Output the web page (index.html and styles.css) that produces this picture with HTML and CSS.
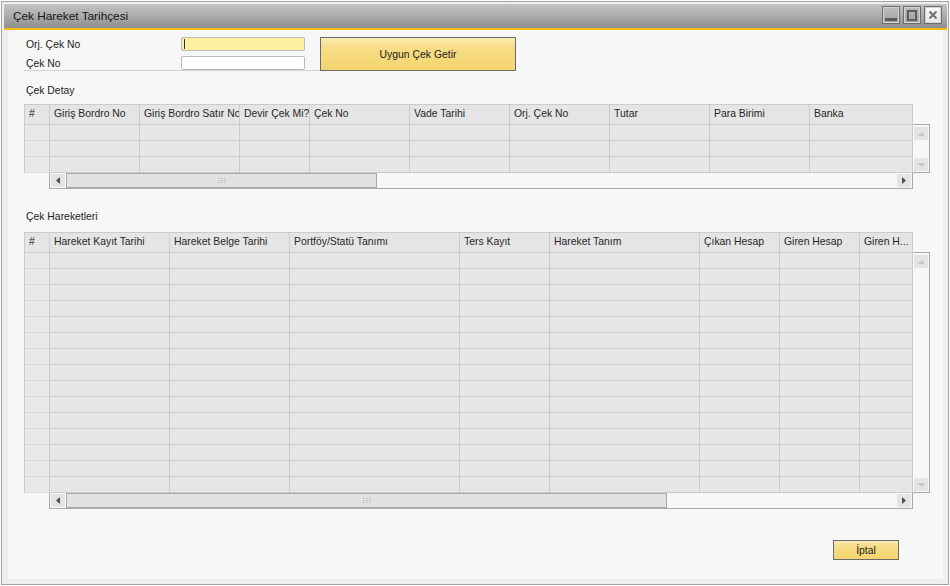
FILE: index.html
```html
<!DOCTYPE html>
<html lang="tr">
<head>
<meta charset="utf-8">
<title>Çek Hareket Tarihçesi</title>
<link rel="stylesheet" href="styles.css">
</head>
<body>
<div class="window">
  <div class="titlebar">
    <span class="title">Çek Hareket Tarihçesi</span>
    <div class="winbtns">
      <span class="wbtn"><svg width="16" height="16" viewBox="0 0 16 16"><rect x="2" y="11" width="12" height="3" fill="#5c5c5c"/></svg></span>
      <span class="wbtn"><svg width="16" height="16" viewBox="0 0 16 16"><rect x="4" y="4" width="8" height="9" fill="none" stroke="#5c5c5c" stroke-width="2"/></svg></span>
      <span class="wbtn close"><svg width="16" height="16" viewBox="0 0 16 16"><path d="M4.5 4.5 L11.5 11.5 M11.5 4.5 L4.5 11.5" stroke="#6e6e6e" stroke-width="2" fill="none"/></svg></span>
    </div>
  </div>
  <div class="accent"></div>
  <div class="content">
    <div class="form">
      <div class="fields">
        <div class="frow"><span class="flabel">Orj. Çek No</span><div class="finput active"><span class="caret"></span></div></div>
        <div class="frow last"><span class="flabel">Çek No</span><div class="finput"></div></div>
      </div>
      <button class="btn big">Uygun Çek Getir</button>
    </div>

    <div class="section-label s1">Çek Detay</div>
    <div class="grid g1">
      <div class="grid-top">
        <div class="table">
          <div class="row head"><div>#</div><div>Giriş Bordro No</div><div>Giriş Bordro Satır No</div><div>Devir Çek Mi?</div><div>Çek No</div><div>Vade Tarihi</div><div>Orj. Çek No</div><div>Tutar</div><div>Para Birimi</div><div>Banka</div></div>
          <div class="row"><div class="n"></div><div></div><div></div><div></div><div></div><div></div><div></div><div></div><div></div><div></div></div>
          <div class="row"><div class="n"></div><div></div><div></div><div></div><div></div><div></div><div></div><div></div><div></div><div></div></div>
          <div class="row"><div class="n"></div><div></div><div></div><div></div><div></div><div></div><div></div><div></div><div></div><div></div></div>
        </div>
        <div class="vscroll">
          <span class="vb"><svg width="7" height="4" viewBox="0 0 7 4"><path d="M0 4 L3.5 0 L7 4 Z" fill="#c3c3c3"/></svg></span>
          <span class="vb"><svg width="7" height="4" viewBox="0 0 7 4"><path d="M0 0 L3.5 4 L7 0 Z" fill="#c3c3c3"/></svg></span>
        </div>
      </div>
      <div class="hscroll">
        <span class="hb"><svg width="4" height="7" viewBox="0 0 4 7"><path d="M4 0 L0 3.5 L4 7 Z" fill="#4d4d4d"/></svg></span>
        <span class="thumb" style="width:311px"><svg width="8" height="5" viewBox="0 0 8 5"><g fill="#a9a9a9"><rect x="0" y="0" width="1" height="1"/><rect x="3" y="0" width="1" height="1"/><rect x="6" y="0" width="1" height="1"/><rect x="1" y="2" width="1" height="1"/><rect x="4" y="2" width="1" height="1"/><rect x="7" y="2" width="1" height="1"/><rect x="0" y="4" width="1" height="1"/><rect x="3" y="4" width="1" height="1"/><rect x="6" y="4" width="1" height="1"/></g></svg></span>
        <span class="hb right"><svg width="4" height="7" viewBox="0 0 4 7"><path d="M0 0 L4 3.5 L0 7 Z" fill="#4d4d4d"/></svg></span>
      </div>
    </div>

    <div class="section-label s2">Çek Hareketleri</div>
    <div class="grid g2">
      <div class="grid-top">
        <div class="table">
          <div class="row head"><div>#</div><div>Hareket Kayıt Tarihi</div><div>Hareket Belge Tarihi</div><div>Portföy/Statü Tanımı</div><div>Ters Kayıt</div><div>Hareket Tanım</div><div>Çıkan Hesap</div><div>Giren Hesap</div><div>Giren H...</div></div>
          <div class="row"><div class="n"></div><div></div><div></div><div></div><div></div><div></div><div></div><div></div><div></div></div>
          <div class="row"><div class="n"></div><div></div><div></div><div></div><div></div><div></div><div></div><div></div><div></div></div>
          <div class="row"><div class="n"></div><div></div><div></div><div></div><div></div><div></div><div></div><div></div><div></div></div>
          <div class="row"><div class="n"></div><div></div><div></div><div></div><div></div><div></div><div></div><div></div><div></div></div>
          <div class="row"><div class="n"></div><div></div><div></div><div></div><div></div><div></div><div></div><div></div><div></div></div>
          <div class="row"><div class="n"></div><div></div><div></div><div></div><div></div><div></div><div></div><div></div><div></div></div>
          <div class="row"><div class="n"></div><div></div><div></div><div></div><div></div><div></div><div></div><div></div><div></div></div>
          <div class="row"><div class="n"></div><div></div><div></div><div></div><div></div><div></div><div></div><div></div><div></div></div>
          <div class="row"><div class="n"></div><div></div><div></div><div></div><div></div><div></div><div></div><div></div><div></div></div>
          <div class="row"><div class="n"></div><div></div><div></div><div></div><div></div><div></div><div></div><div></div><div></div></div>
          <div class="row"><div class="n"></div><div></div><div></div><div></div><div></div><div></div><div></div><div></div><div></div></div>
          <div class="row"><div class="n"></div><div></div><div></div><div></div><div></div><div></div><div></div><div></div><div></div></div>
          <div class="row"><div class="n"></div><div></div><div></div><div></div><div></div><div></div><div></div><div></div><div></div></div>
          <div class="row"><div class="n"></div><div></div><div></div><div></div><div></div><div></div><div></div><div></div><div></div></div>
          <div class="row"><div class="n"></div><div></div><div></div><div></div><div></div><div></div><div></div><div></div><div></div></div>
        </div>
        <div class="vscroll">
          <span class="vb"><svg width="7" height="4" viewBox="0 0 7 4"><path d="M0 4 L3.5 0 L7 4 Z" fill="#c3c3c3"/></svg></span>
          <span class="vb"><svg width="7" height="4" viewBox="0 0 7 4"><path d="M0 0 L3.5 4 L7 0 Z" fill="#c3c3c3"/></svg></span>
        </div>
      </div>
      <div class="hscroll">
        <span class="hb"><svg width="4" height="7" viewBox="0 0 4 7"><path d="M4 0 L0 3.5 L4 7 Z" fill="#4d4d4d"/></svg></span>
        <span class="thumb" style="width:601px"><svg width="8" height="5" viewBox="0 0 8 5"><g fill="#a9a9a9"><rect x="0" y="0" width="1" height="1"/><rect x="3" y="0" width="1" height="1"/><rect x="6" y="0" width="1" height="1"/><rect x="1" y="2" width="1" height="1"/><rect x="4" y="2" width="1" height="1"/><rect x="7" y="2" width="1" height="1"/><rect x="0" y="4" width="1" height="1"/><rect x="3" y="4" width="1" height="1"/><rect x="6" y="4" width="1" height="1"/></g></svg></span>
        <span class="hb right"><svg width="4" height="7" viewBox="0 0 4 7"><path d="M0 0 L4 3.5 L0 7 Z" fill="#4d4d4d"/></svg></span>
      </div>
    </div>

    <div class="footer">
      <button class="btn small">İptal</button>
    </div>
  </div>
</div>
</body>
</html>
```

FILE: styles.css
```css
* { box-sizing: border-box; }
html, body { margin: 0; padding: 0; background: #ffffff; }
body {
  font-family: "Liberation Sans", Arial, sans-serif;
  font-size: 10.4px;
  color: #1b1b1b;
}

.window {
  margin: 1px 0 0 1px;
  width: 948px;
  height: 584px;
  border: 1px solid #a2a2a2;
  background: #eeeeee;
  padding: 2px 1px 5px 2px;
  display: flex;
  flex-direction: column;
}

.titlebar {
  flex: none;
  height: 24px;
  display: flex;
  justify-content: space-between;
  align-items: flex-start;
  padding: 0 5px 0 9px;
  background: linear-gradient(#c3c3c3, #a8a8a8 55%, #8e8e8e);
}
.title {
  font-size: 11.8px;
  line-height: 25px;
  color: #161616;
}
.winbtns { display: flex; gap: 3px; padding-top: 2px; }
.wbtn {
  width: 18px;
  height: 18px;
  border: 1px solid #6d6d6d;
  box-shadow: inset 0 0 0 1px #d4d4d4;
  background: linear-gradient(#bcbcbc, #a2a2a2);
  display: flex;
}
.wbtn.close { background: linear-gradient(#f8f8f8, #e7e7e7); }

.accent { flex: none; height: 2px; background: #f9b90f; }

.content {
  flex: 1;
  margin: 0 4px;
  background: #f7f7f7;
  padding: 7px 0 0 16px;
  display: flex;
  flex-direction: column;
}

/* form */
.form { display: flex; align-items: flex-start; }
.fields { width: 296px; display: flex; flex-direction: column; gap: 5px; }
.frow { display: flex; height: 14px; }
.frow.last { height: 15px; border-bottom: 1px solid #d3d3d3; }
.flabel { width: 157px; padding-left: 2px; line-height: 16px; white-space: nowrap; }
.finput {
  width: 124px;
  height: 14px;
  border: 1px solid #bdbdbd;
  border-radius: 2px;
  background: #ffffff;
}
.finput.active { background: #ffefa1; padding: 1px 0 0 2px; }
.caret { display: block; width: 1px; height: 10px; background: #1c2f6b; }

.btn {
  font: inherit;
  color: #1b1b1b;
  padding: 0;
  border: 1px solid #6b6b6b;
  background: linear-gradient(#faecb4 0%, #f6dd87 28%, #f4d46d 100%);
}
.btn.big { width: 196px; height: 34px; }
.btn.small { width: 66px; height: 20px; }

/* section labels */
.section-label { height: 14px; line-height: 14px; padding-left: 2px; }
.s1 { margin-top: 13px; }
.g1 { margin-top: 6px; }
.s2 { margin-top: 21px; }
.g2 { margin-top: 8px; }

/* grids */
.grid-top { display: flex; align-items: flex-start; }
.table {
  width: 889px;
  border-top: 1px solid #cbcbcb;
  border-left: 1px solid #cbcbcb;
}
.row { display: grid; }
.g1 .row { grid-template-columns: 25px 90px 100px 70px 100px 100px 100px 100px 100px 103px; }
.g2 .row { grid-template-columns: 25px 120px 120px 170px 90px 150px 80px 80px 53px; }
.row > div {
  height: 16px;
  border-right: 1px solid #cbcbcb;
  border-bottom: 1px solid #cbcbcb;
  background: #e6e6e6;
}
.row > div.n { background: #e8e8e8; border-bottom-color: #d9d9d9; }
.row.head > div {
  height: 20px;
  line-height: 17px;
  padding-left: 4px;
  white-space: nowrap;
  overflow: hidden;
  color: #262626;
  background: #e5e5e5;
}

.vscroll {
  width: 17px;
  margin-top: 20px;
  border: 1px solid #a9a9a9;
  border-left: none;
  background: #f7f7f7;
  padding: 2px 1px 1px 0;
  display: flex;
  flex-direction: column;
  justify-content: space-between;
}
.g1 .vscroll { height: 49px; }
.g2 .vscroll { height: 241px; }
.vb {
  width: 14px;
  height: 13px;
  margin-left: 1px;
  background: #e4e4e4;
  display: flex;
  align-items: center;
  justify-content: center;
}

.hscroll {
  margin-left: 25px;
  width: 864px;
  height: 16px;
  border: 1px solid #a9a9a9;
  border-top: none;
  background: #f7f7f7;
  display: flex;
  align-items: flex-start;
}
.hb {
  width: 14px;
  height: 13px;
  margin: 1px 0 0 1px;
  background: #e4e4e4;
  display: flex;
  align-items: center;
  justify-content: center;
}
.hb.right { margin: 1px 1px 0 auto; }
.thumb {
  height: 15px;
  margin-left: 1px;
  border: 1px solid #a9a9a9;
  background: #e2e2e2;
  display: flex;
  align-items: center;
  justify-content: center;
}

.footer {
  display: flex;
  justify-content: flex-end;
  padding-right: 44px;
  margin-top: 31px;
}
```
